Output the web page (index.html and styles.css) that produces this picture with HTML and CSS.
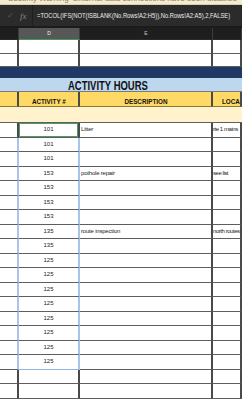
FILE: index.html
```html
<!DOCTYPE html>
<html>
	<head>
		<meta charset="UTF-8">
		<title>Activity Hours</title>
		<link rel="stylesheet" href="styles.css">
	</head>
	<body>
		<div class="notice"><span>Security Warning&nbsp;&nbsp;External data connections have been disabled</span></div>

		<div class="formula-bar">
			<span class="fb-check">&#10003;</span>
			<span class="fb-fx">fx</span>
			<div class="formula"><span>=TOCOL(IFS(NOT(ISBLANK(No.Rows!A2:H5)),No.Rows!A2:A5),2,FALSE)</span></div>
		</div>

		<div class="sheet">
			<!-- column letters -->
			<div class="row col-head">
				<div class="cell"></div>
				<div class="cell active">D</div>
				<div class="cell">E</div>
				<div class="cell"></div>
			</div>

			<div class="row blank"><div class="cell"></div><div class="cell"></div><div class="cell"></div><div class="cell"></div></div>
			<div class="row blank"><div class="cell"></div><div class="cell"></div><div class="cell"></div><div class="cell"></div></div>

			<div class="band navy"></div>
			<div class="band title"><span>ACTIVITY HOURS</span></div>

			<div class="row heads">
				<div class="cell"></div>
				<div class="cell"><span>ACTIVITY #</span></div>
				<div class="cell"><span>DESCRIPTION</span></div>
				<div class="cell left"><span>LOCA</span></div>
			</div>
			<div class="band cream"></div>

			<div class="row data selected">
				<div class="cell"></div><div class="cell num">101</div><div class="cell text">Litter</div><div class="cell text loc">rte 1 mains</div>
			</div>
			<div class="row data spill"><div class="cell"></div><div class="cell num">101</div><div class="cell text"></div><div class="cell text"></div></div>
			<div class="row data spill"><div class="cell"></div><div class="cell num">101</div><div class="cell text"></div><div class="cell text"></div></div>
			<div class="row data spill"><div class="cell"></div><div class="cell num">153</div><div class="cell text">pothole repair</div><div class="cell text loc">see list</div></div>
			<div class="row data spill"><div class="cell"></div><div class="cell num">153</div><div class="cell text"></div><div class="cell text"></div></div>
			<div class="row data spill"><div class="cell"></div><div class="cell num">153</div><div class="cell text"></div><div class="cell text"></div></div>
			<div class="row data spill"><div class="cell"></div><div class="cell num">153</div><div class="cell text"></div><div class="cell text"></div></div>
			<div class="row data spill"><div class="cell"></div><div class="cell num">135</div><div class="cell text">route inspection</div><div class="cell text loc">north routes</div></div>
			<div class="row data spill"><div class="cell"></div><div class="cell num">135</div><div class="cell text"></div><div class="cell text"></div></div>
			<div class="row data spill"><div class="cell"></div><div class="cell num">125</div><div class="cell text"></div><div class="cell text"></div></div>
			<div class="row data spill"><div class="cell"></div><div class="cell num">125</div><div class="cell text"></div><div class="cell text"></div></div>
			<div class="row data spill"><div class="cell"></div><div class="cell num">125</div><div class="cell text"></div><div class="cell text"></div></div>
			<div class="row data spill"><div class="cell"></div><div class="cell num">125</div><div class="cell text"></div><div class="cell text"></div></div>
			<div class="row data spill"><div class="cell"></div><div class="cell num">125</div><div class="cell text"></div><div class="cell text"></div></div>
			<div class="row data spill"><div class="cell"></div><div class="cell num">125</div><div class="cell text"></div><div class="cell text"></div></div>
			<div class="row data spill"><div class="cell"></div><div class="cell num">125</div><div class="cell text"></div><div class="cell text"></div></div>
			<div class="row data spill last"><div class="cell"></div><div class="cell num">125</div><div class="cell text"></div><div class="cell text"></div></div>
			<div class="row data"><div class="cell"></div><div class="cell num"></div><div class="cell text"></div><div class="cell text"></div></div>
			<div class="row data"><div class="cell"></div><div class="cell num"></div><div class="cell text"></div><div class="cell text"></div></div>
		</div>
	</body>
</html>
```

FILE: styles.css
```css
*{
	margin: 0;
	padding: 0;
	box-sizing: border-box;
}
body{
	width: 242px;
	height: 400px;
	overflow: hidden;
	background: #fff;
	font-family: "Liberation Sans", Arial, sans-serif;
}

/* top warning strip, cut off by the screenshot */
.notice{
	height: 5px;
	overflow: hidden;
	background: #f4ebcf;
	border-bottom: 1px solid #d9cfae;
}
.notice span{
	display: block;
	margin-top: -6px;
	padding-left: 8px;
	font-size: 8px;
	line-height: 9px;
	color: #8a8068;
	white-space: nowrap;
}

/* formula bar */
.formula-bar{
	display: flex;
	align-items: center;
	height: 23px;
	background: #2b2b2b;
	border-bottom: 2px solid #1b1b1b;
}
.fb-check{
	width: 20px;
	padding-left: 7px;
	font-size: 8px;
	color: #5e5e5e;
}
.fb-fx{
	width: 12px;
	font-family: "Liberation Serif", serif;
	font-style: italic;
	font-size: 9px;
	color: #8a8a8a;
}
.formula{
	flex: 1;
	height: 100%;
	display: flex;
	align-items: center;
	padding-left: 4px;
	border-left: 1px solid #202020;
	white-space: nowrap;
	overflow: hidden;
}
.formula span{
	display: inline-block;
	font-size: 7px;
	color: #ececec;
	transform: scaleX(0.83);
	transform-origin: left center;
}

/* grid */
.row{
	display: grid;
	grid-template-columns: 19px 61px 133px 1fr;
}
.cell{
	border-right: 2px solid #4a4a4a;
	border-bottom: 1px solid #5e5e5e;
	white-space: nowrap;
	overflow: hidden;
}

.col-head{
	height: 12px;
	background: #1e1e1e;
}
.col-head .cell{
	border-right: 1px solid #3c3c3c;
	border-bottom: 1px solid #2a2a2a;
	font-size: 5px;
	line-height: 11px;
	text-align: center;
	color: #c8c8c8;
}
.col-head .cell.active{
	background: #575757;
	border-bottom: 1px solid #3f9a5a;
	color: #f0f0f0;
}

.blank{
	height: 13.5px;
}

.band{
	border-bottom: 1px solid #7a7a7a;
}
.navy{
	height: 11px;
	background: #1f3864;
	border-bottom: none;
}
.title{
	height: 14px;
	background: #bdd7ee;
	padding-left: 68px;
	line-height: 14px;
}
.title span{
	display: inline-block;
	font-size: 12px;
	font-weight: bold;
	color: #111;
	transform: scaleX(0.79);
	transform-origin: left center;
}

.heads{
	height: 15px;
	background: #ffd966;
}
.heads .cell{
	border-bottom: 1px solid #8a7a3a;
	text-align: center;
	line-height: 14px;
}
.heads .cell span{
	display: inline-block;
	font-size: 7px;
	font-weight: bold;
	color: #111;
	transform: scaleX(0.9);
}
.heads .cell.left{
	text-align: left;
	padding-left: 8px;
}

.cream{
	height: 16px;
	background: #fff2cc;
	border-bottom: 1px solid #5e5e5e;
}

.data{
	height: 14.5px;
}
.data .cell{
	font-size: 6px;
	line-height: 13px;
	color: #222;
}
.data .num{
	text-align: center;
}
.data .text{
	padding-left: 1px;
	letter-spacing: -0.2px;
}
.data .loc{
	padding-left: 0;
	letter-spacing: -0.45px;
}

/* selected cell and spilled range */
.selected .cell:nth-child(2){
	box-shadow: inset 0 0 0 1px #4f9a67;
}
.spill .cell:nth-child(1){
	border-right-color: #a9c4ea;
}
.spill .cell:nth-child(2){
	border-right-color: #a9c4ea;
}
.spill.last .cell:nth-child(2){
	border-bottom-color: #8fb1e3;
}
```
